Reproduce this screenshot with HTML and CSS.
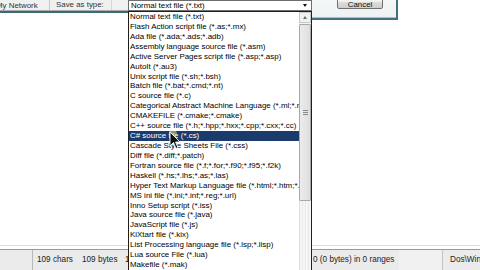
FILE: index.html
```html
<!DOCTYPE html>
<html>
<head>
<meta charset="utf-8">
<link rel="stylesheet" href="styles.css">
</head>
<body>
<div class="editor">
  <div class="text-area"></div>
  <div class="gap"></div>
  <div class="status">
    <span class="sb f0"></span>
    <span class="sb f1">109 chars</span>
    <span class="sb f2">109 bytes</span>
    <span class="sb f3">1 lines</span>
    <span class="sb f4">0 (0 bytes) in 0 ranges</span>
    <span class="sb f5">Dos\Windows</span>
  </div>
</div>

<div class="dialog">
  <div class="dlg-left">
    <div class="band">
      <span class="net">My Network</span>
      <span class="sep"></span>
      <span class="type-label">Save as type:</span>
    </div>
    <div class="band-line"></div>
  </div>
  <div class="combo">
    <span class="combo-text">Normal text file (*.txt)</span>
    <span class="combo-arrow"></span>
  </div>
  <div class="dlg-right">
    <div class="btn">Cancel</div>
  </div>
</div>

<div class="dropdown">
  <div class="items">
    <div class="item">Normal text file (*.txt)</div>
    <div class="item">Flash Action script file (*.as;*.mx)</div>
    <div class="item">Ada file (*.ada;*.ads;*.adb)</div>
    <div class="item">Assembly language source file (*.asm)</div>
    <div class="item">Active Server Pages script file (*.asp;*.asp)</div>
    <div class="item">AutoIt (*.au3)</div>
    <div class="item">Unix script file (*.sh;*.bsh)</div>
    <div class="item">Batch file (*.bat;*.cmd;*.nt)</div>
    <div class="item">C source file (*.c)</div>
    <div class="item">Categorical Abstract Machine Language (*.ml;*.mli;*.sml;*.thy)</div>
    <div class="item">CMAKEFILE (*.cmake;*.cmake)</div>
    <div class="item">C++ source file (*.h;*.hpp;*.hxx;*.cpp;*.cxx;*.cc)</div>
    <div class="item selected">C# source file (*.cs)</div>
    <div class="item">Cascade Style Sheets File (*.css)</div>
    <div class="item">Diff file (*.diff;*.patch)</div>
    <div class="item">Fortran source file (*.f;*.for;*.f90;*.f95;*.f2k)</div>
    <div class="item">Haskell (*.hs;*.lhs;*.as;*.las)</div>
    <div class="item">Hyper Text Markup Language file (*.html;*.htm;*.shtml;*.shtm)</div>
    <div class="item">MS ini file (*.ini;*.inf;*.reg;*.url)</div>
    <div class="item">Inno Setup script (*.iss)</div>
    <div class="item">Java source file (*.java)</div>
    <div class="item">JavaScript file (*.js)</div>
    <div class="item">KiXtart file (*.kix)</div>
    <div class="item">List Processing language file (*.lsp;*.lisp)</div>
    <div class="item">Lua source File (*.lua)</div>
    <div class="item">Makefile (*.mak)</div>
    <div class="item">Matlab file (*.m)</div>
  </div>
  <div class="scrollbar">
    <div class="sb-up"><span class="up-arrow"></span></div>
    <div class="thumb"><span class="grip"></span><span class="grip"></span><span class="grip"></span></div>
    <div class="track"></div>
  </div>
</div>

<svg class="cursor" width="16" height="22" viewBox="0 0 16 22">
  <circle cx="3" cy="3" r="5" fill="#e8e060" fill-opacity="0.55"/>
  <path d="M1 1 L1 15 L4.5 11.5 L7 17.5 L9 16.7 L6.6 11 L11 11 Z" fill="#111" stroke="#fff" stroke-width="0.9"/>
</svg>
</body>
</html>
```
FILE: styles.css
```css
html, body {
  margin: 0;
  padding: 0;
}
body {
  width: 480px;
  height: 270px;
  overflow: hidden;
  position: relative;
  background: #fff;
  font-family: "Liberation Sans", Arial, sans-serif;
  color: #000;
}

/* editor */
.editor {
  display: flex;
  flex-direction: column;
  width: 480px;
  height: 270px;
}
.text-area {
  flex: 1;
  background: #fff;
  border-bottom: 1px solid #dedede;
}
.gap {
  height: 3px;
  background: #fff;
}
.status {
  height: 20px;
  border-top: 1px solid #9a9a9a;
  background: #ebebeb;
  display: flex;
  align-items: center;
  font-size: 8.2px;
  color: #222;
  white-space: nowrap;
  overflow: hidden;
}
.sb {
  box-sizing: border-box;
  height: 20px;
  line-height: 20px;
  flex: none;
  overflow: hidden;
}
.f0 { width: 33px; border-right: 1px solid #b8b8b8; }
.f1 { width: 45px; padding-left: 4px; }
.f2 { width: 43px; padding-left: 4px; }
.f3 { width: 188px; padding-left: 4px; }
.f4 { width: 134px; padding-left: 4px; border-right: 1px solid #c4c4c4; background: linear-gradient(to right, #ebebeb 0 68%, #f1f1f1 68%); }
.f5 { padding-left: 7px; }

/* dialog remnants */
.dialog {
  position: absolute;
  left: 0;
  top: 0;
  display: flex;
  align-items: flex-start;
}
.dlg-left {
  width: 128px;
  height: 13px;
  box-sizing: border-box;
  border-bottom: 2px solid #3c6a73;
}
.band {
  height: 10px;
  background: #eff0f0;
  display: flex;
  align-items: center;
  font-size: 7.9px;
  color: #333;
  white-space: nowrap;
  overflow: hidden;
}
.net {
  margin-left: -4px;
  width: 53px;
  flex: none;
}
.sep {
  width: 1px;
  height: 10px;
  background: #c9c9c9;
  flex: none;
}
.type-label {
  padding-left: 6px;
  width: 55px;
  height: 10px;
  line-height: 10px;
  border-right: 1px solid #d6d6d6;
  flex: none;
}
.band-line {
  height: 1px;
  background: #a9adae;
}
.combo {
  width: 184px;
  height: 11px;
  box-sizing: border-box;
  border: 1px solid #6e6e6e;
  background: #fff;
  display: flex;
  align-items: center;
  justify-content: space-between;
  font-size: 7.9px;
  padding-left: 2px;
  padding-right: 4px;
}
.combo-text {
  line-height: 9px;
  white-space: nowrap;
}
.combo-arrow {
  width: 0;
  height: 0;
  border-left: 2.5px solid transparent;
  border-right: 2.5px solid transparent;
  border-top: 3px solid #111;
  margin-top: -1px;
}
.dlg-right {
  width: 86px;
  height: 20px;
  box-sizing: border-box;
  background: linear-gradient(#f4f6f7, #eef2f3);
  border-right: 2px solid #3f7180;
  border-bottom: 2px solid #3f7180;
  box-shadow: inset 0 -1px 0 #a9c3ca;
  padding-left: 25px;
}
.btn {
  width: 46px;
  height: 14px;
  margin-top: -5px;
  box-sizing: border-box;
  border: 1px solid #707070;
  border-radius: 2px;
  background: linear-gradient(#f2f2f2 0 45%, #dcdcdc 55%, #cfcfcf);
  font-size: 7.9px;
  line-height: 18px;
  text-align: center;
  color: #111;
}

/* dropdown list */
.dropdown {
  position: absolute;
  left: 128px;
  top: 11px;
  width: 184px;
  height: 270px;
  box-sizing: border-box;
  border: 1px solid #1e1e1e;
  background: #fff;
  display: flex;
}
.items {
  width: 170px;
  flex: none;
  display: flex;
  flex-direction: column;
}
.item {
  height: 10px;
  line-height: 10px;
  font-size: 7.95px;
  padding-left: 1px;
  white-space: nowrap;
  overflow: hidden;
  color: #000;
}
.item.selected {
  background: #1b3b6d;
  color: #fff;
}
.scrollbar {
  width: 12px;
  flex: none;
  display: flex;
  flex-direction: column;
  background: #f3f3f3;
}
.sb-up {
  height: 11px;
  box-sizing: border-box;
  border: 1px solid #c9c9c9;
  background: #f0f0f0;
  display: flex;
  align-items: center;
  justify-content: center;
}
.up-arrow {
  width: 0;
  height: 0;
  border-left: 2.5px solid transparent;
  border-right: 2.5px solid transparent;
  border-bottom: 3px solid #6a6a6a;
}
.thumb {
  margin-top: 1px;
  height: 177px;
  box-sizing: border-box;
  border: 1px solid #a8a8a8;
  border-radius: 1px;
  background: linear-gradient(to right, #ececec, #dedede);
  display: flex;
  flex-direction: column;
  justify-content: center;
  align-items: center;
  gap: 1px;
}
.grip {
  width: 5px;
  height: 1px;
  background: #8a8a8a;
}
.track {
  flex: 1;
  background: repeating-linear-gradient(to right, #f6f6f6 0 2px, #e9e9e9 2px 3px);
  border-left: 1px solid #dcdcdc;
}

.cursor {
  position: absolute;
  left: 169px;
  top: 131px;
}
```
